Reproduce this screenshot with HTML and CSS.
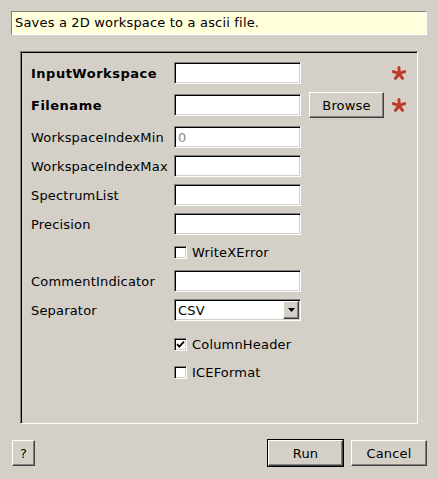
FILE: index.html
```html
<!DOCTYPE html>
<html>
<head>
<meta charset="utf-8">
<title>SaveAscii</title>
<link rel="stylesheet" href="styles.css">
</head>
<body>
<div class="dialog">
  <div class="tip">Saves a 2D workspace to a ascii file.</div>
  <div class="panel">
    <div class="row first">
      <span class="label bold">InputWorkspace</span>
      <span class="field"></span>
      <span class="req"><svg width="16" height="14" viewBox="0 0 16 14"><g stroke="#bf3a2b" stroke-width="3" stroke-linecap="round"><line x1="8" y1="7.5" x2="8" y2="1.5"/><line x1="8" y1="7.5" x2="13.7" y2="5.65"/><line x1="8" y1="7.5" x2="11.5" y2="12.3"/><line x1="8" y1="7.5" x2="4.5" y2="12.3"/><line x1="8" y1="7.5" x2="2.3" y2="5.65"/></g></svg></span>
    </div>
    <div class="row sp10">
      <span class="label bold">Filename</span>
      <span class="field"></span>
      <span class="btn browse">Browse</span>
      <span class="req"><svg width="16" height="14" viewBox="0 0 16 14"><g stroke="#bf3a2b" stroke-width="3" stroke-linecap="round"><line x1="8" y1="7.5" x2="8" y2="1.5"/><line x1="8" y1="7.5" x2="13.7" y2="5.65"/><line x1="8" y1="7.5" x2="11.5" y2="12.3"/><line x1="8" y1="7.5" x2="4.5" y2="12.3"/><line x1="8" y1="7.5" x2="2.3" y2="5.65"/></g></svg></span>
    </div>
    <div class="row sp10">
      <span class="label">WorkspaceIndexMin</span>
      <span class="field"><span class="hint">0</span></span>
    </div>
    <div class="row">
      <span class="label">WorkspaceIndexMax</span>
      <span class="field"></span>
    </div>
    <div class="row">
      <span class="label">SpectrumList</span>
      <span class="field"></span>
    </div>
    <div class="row">
      <span class="label">Precision</span>
      <span class="field"></span>
    </div>
    <div class="row check-row sp11">
      <span class="check"><span class="box"></span>WriteXError</span>
    </div>
    <div class="row sp11">
      <span class="label">CommentIndicator</span>
      <span class="field"></span>
    </div>
    <div class="row">
      <span class="label">Separator</span>
      <span class="field combo"><span class="combo-text">CSV</span><span class="arrow"><svg width="7" height="4" viewBox="0 0 7 4"><path d="M0 0H7L3.5 4Z" fill="#000"/></svg></span></span>
    </div>
    <div class="row check-row sp17">
      <span class="check"><span class="box"><svg width="9" height="9" viewBox="0 0 9 9"><path d="M1 4.2L3.3 6.6L8 1.6" fill="none" stroke="#000" stroke-width="1.8"/></svg></span>ColumnHeader</span>
    </div>
    <div class="row check-row sp15">
      <span class="check"><span class="box"></span>ICEFormat</span>
    </div>
  </div>
  <div class="actions">
    <span class="btn help">?</span>
    <span class="spacer"></span>
    <span class="default"><span class="btn run">Run</span></span>
    <span class="btn cancel">Cancel</span>
  </div>
</div>
</body>
</html>
```
FILE: styles.css
```css
html, body {
  margin: 0;
  padding: 0;
  background: #d4d0c8;
}
body {
  font-family: "DejaVu Sans", "Liberation Sans", sans-serif;
  font-size: 13px;
  letter-spacing: 0.18px;
  color: #000;
}
.dialog {
  width: 438px;
  height: 479px;
  box-sizing: border-box;
  padding: 11px 11px 0 11px;
}
.tip {
  box-sizing: border-box;
  width: 416px;
  height: 24px;
  background: #ffffdc;
  border: 1px solid;
  border-color: #808080 #ffffff #ffffff #808080;
  padding-left: 3px;
  line-height: 22px;
  white-space: nowrap;
}
.panel {
  box-sizing: border-box;
  margin: 16px 0 0 9px;
  width: 398px;
  height: 373px;
  border: 1px solid;
  border-color: #808080 #ffffff #ffffff #808080;
  box-shadow: inset 1px 1px #000, inset -1px -1px #d4d0c8;
  padding: 10px 0 0 10px;
  display: flex;
  flex-direction: column;
}
.row {
  display: grid;
  grid-template-columns: 143px 127px 8px 75px 7px 16px;
  grid-template-rows: 22px;
  height: 22px;
  align-items: center;
  margin-top: 7px;
  white-space: nowrap;
}
.row.first { margin-top: 0; }
.row.sp10 { margin-top: 10px; }
.row.sp11 { margin-top: 11px; }
.row.sp15 { margin-top: 15px; }
.row.sp17 { margin-top: 17px; }
.row.check-row {
  grid-template-rows: 13px;
  height: 13px;
}
.label { grid-column: 1; }
.bold { font-weight: bold; letter-spacing: 0.5px; }
.field {
  grid-column: 2;
  box-sizing: border-box;
  height: 22px;
  background: #fff;
  border: 1px solid;
  border-color: #808080 #ffffff #ffffff #808080;
  box-shadow: inset 1px 1px #000, inset -1px -1px #d4d0c8;
  display: flex;
  align-items: center;
  padding-left: 3px;
}
.hint { color: #8a8a8a; }
.req {
  grid-column: 6;
  display: flex;
  align-items: center;
  height: 14px;
}
.btn {
  box-sizing: border-box;
  display: flex;
  align-items: center;
  justify-content: center;
  background: #d4d0c8;
  border: 1px solid;
  border-color: #ffffff #404040 #404040 #ffffff;
  box-shadow: inset -1px -1px #808080;
  height: 26px;
}
.browse {
  grid-column: 4;
  width: 75px;
  margin: -2px 0;
}
.check {
  grid-column: 2 / span 5;
  display: flex;
  align-items: center;
  height: 13px;
}
.box {
  box-sizing: border-box;
  width: 13px;
  height: 13px;
  background: #fff;
  border: 1px solid;
  border-color: #808080 #ffffff #ffffff #808080;
  box-shadow: inset 1px 1px #000, inset -1px -1px #d4d0c8;
  margin-right: 5px;
  display: flex;
  align-items: center;
  justify-content: center;
  flex: none;
}
.box svg { display: block; }
.combo {
  padding-left: 3px;
  padding-right: 1px;
}
.combo-text { flex: 1; }
.arrow {
  box-sizing: border-box;
  width: 16px;
  height: 18px;
  background: #d4d0c8;
  border: 1px solid;
  border-color: #ffffff #404040 #404040 #ffffff;
  box-shadow: inset -1px -1px #808080;
  display: flex;
  align-items: center;
  justify-content: center;
}
.arrow svg { display: block; }
.actions {
  margin-top: 16px;
  display: flex;
  align-items: center;
  padding-left: 1px;
  height: 26px;
}
.help { width: 23px; }
.spacer { flex: 1; }
.default {
  box-sizing: border-box;
  border: 1px solid #000;
  width: 77px;
  height: 28px;
  display: flex;
}
.run {
  flex: 1;
  height: 26px;
}
.cancel {
  width: 76px;
  margin-left: 7px;
}
```
